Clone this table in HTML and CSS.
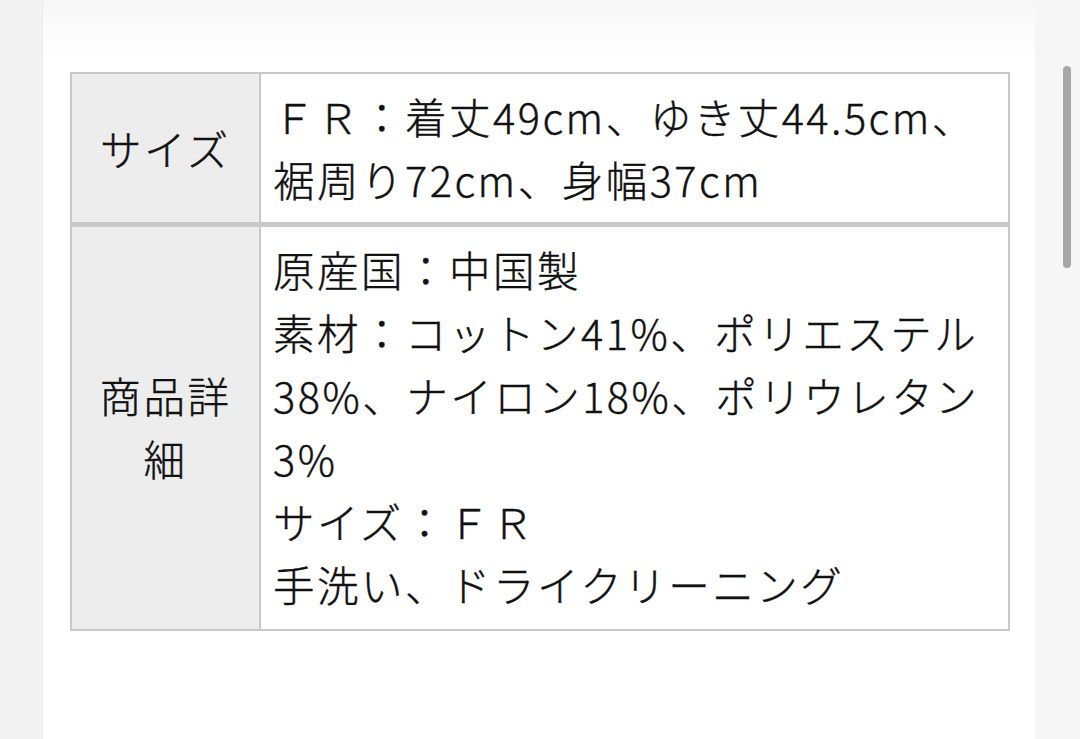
FILE: index.html
```html
<!DOCTYPE html>
<html lang="ja">
<head>
<meta charset="utf-8">
<link rel="stylesheet" href="styles.css">
</head>
<body>
<div class="page">
  <div class="panel">
    <table class="spec">
      <tr class="row-first">
        <th class="label">サイズ</th>
        <td class="value">ＦＲ：着丈49cm、ゆき丈44.5cm、<br>裾周り72cm、身幅37cm</td>
      </tr>
      <tr class="row-second">
        <th class="label">商品詳細</th>
        <td class="value">
          <div class="line">原産国：中国製</div>
          <div class="line">素材：コットン41%、ポリエステル<br>38%、ナイロン18%、ポリウレタン<br>3%</div>
          <div class="line">サイズ：ＦＲ</div>
          <div class="line">手洗い、ドライクリーニング</div>
        </td>
      </tr>
    </table>
  </div>
  <div class="gutter"></div>
  <div class="scroll-thumb"></div>
</div>
</body>
</html>
```

FILE: styles.css
```css
* { box-sizing: border-box; }

html, body {
  margin: 0;
  padding: 0;
}

body {
  background: #f3f3f3;
  font-family: "Noto Sans CJK JP", "Noto Sans", sans-serif;
  color: #111111;
  width: 1080px;
  height: 739px;
  overflow: hidden;
}

.page {
  position: relative;
  display: flex;
  height: 739px;
  padding-left: 43px;
}

.panel {
  width: 992px;
  height: 739px;
  background: linear-gradient(#f7f7f7 0px, #ffffff 60px);
  padding: 72px 25px 0 27px;
  box-shadow: -1px 0 2px rgba(0, 0, 0, 0.03);
}

.gutter {
  flex: 1;
  background: #f6f6f6;
}

.scroll-thumb {
  position: absolute;
  left: 1063px;
  top: 66px;
  width: 8px;
  height: 202px;
  border-radius: 4px;
  background: #a7a7a7;
}

.spec {
  width: 940px;
  border-collapse: collapse;
  border: 2px solid #c9c9c9;
  font-size: 41.5px;
  font-weight: 300;
  letter-spacing: 2.5px;
  line-height: 63px;
  -webkit-text-stroke: 0.4px #111111;
}

.spec th,
.spec td {
  border: 2px solid #c9c9c9;
  padding: 11px 10px 11px 12px;
  vertical-align: middle;
  white-space: nowrap;
}

.row-first th,
.row-first td {
  border-bottom-width: 5px;
}

.row-second th,
.row-second td {
  padding-bottom: 13px;
}

.label {
  width: 189px;
  background: #ededed;
  font-weight: 300;
  text-align: center;
  white-space: normal !important;
  padding-left: 12px !important;
  padding-right: 12px !important;
}

.value {
  background: #ffffff;
  text-align: left;
}

.line {
  display: block;
}
```
